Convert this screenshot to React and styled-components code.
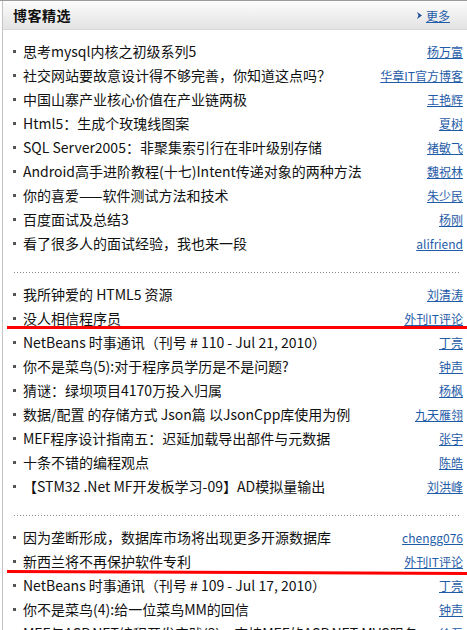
import React from 'react'
import styled, { createGlobalStyle } from 'styled-components'

const GlobalStyle = createGlobalStyle`
  html, body {
    margin: 0;
    padding: 0;
    background: #fff;
    overflow: hidden;
  }
  body {
    font-family: "Noto Sans CJK SC", "Liberation Sans", sans-serif;
  }
`

const Page = styled.div`
  border-top: 1px solid #9a9a9a;
  width: 467px;
  height: 629px;
  overflow: hidden;
`

const Panel = styled.div`
  margin-left: 2px;
  border-left: 1px solid #c4c4c4;
  min-height: 640px;
`

const Header = styled.div`
  height: 28px;
  display: flex;
  align-items: center;
  justify-content: space-between;
  padding: 0 17px 0 10px;
  background: linear-gradient(#fcfcfc, #e3e3e3);
  border-bottom: 1px solid #d8d8d8;
`

const Title = styled.h2`
  margin: 0;
  font-size: 14px;
  font-weight: bold;
  color: #111;
  letter-spacing: 0.5px;
`

const More = styled.a`
  display: flex;
  align-items: center;
  gap: 4px;
  font-size: 12px;
  color: #1f5ca8;
  text-decoration: underline;
  cursor: pointer;
`

const Group = styled.ul`
  list-style: none;
  margin: 0;
  padding: 9px 0 17px;
`

const Divider = styled.div`
  margin: 0 8px 0 11px;
  height: 1px;
  background-image: linear-gradient(to right, #8a8a8a 1px, transparent 1px);
  background-size: 3px 1px;
`

const Row = styled.li`
  position: relative;
  height: 24px;
  display: flex;
  align-items: center;
  padding: 0 4px 0 10px;

  &::after {
    content: '';
    display: ${(p) => (p.$marked ? 'block' : 'none')};
    position: absolute;
    left: 4px;
    right: -12px;
    bottom: ${(p) => (p.$tilt ? '0px' : '1px')};
    height: 3px;
    background: #f00;
    transform: ${(p) => (p.$tilt ? 'rotate(0.25deg)' : 'none')};
    transform-origin: left center;
  }
`

const Bullet = styled.span`
  width: 3px;
  height: 3px;
  background: #555;
  margin-right: 7px;
  flex: none;
`

const Headline = styled.span`
  flex: 1;
  min-width: 0;
  font-size: 14px;
  line-height: 24px;
  color: #111;
  white-space: nowrap;
  overflow: hidden;
`

const Author = styled.a`
  flex: none;
  margin-left: 8px;
  font-size: 12px;
  color: #1f5ca8;
  text-decoration: underline;
  cursor: pointer;
`

const groups = [
  [
    ['思考mysql内核之初级系列5', '杨万富'],
    ['社交网站要故意设计得不够完善，你知道这点吗？', '华章IT官方博客'],
    ['中国山寨产业核心价值在产业链两极', '王艳辉'],
    ['Html5：生成个玫瑰线图案', '夏树'],
    ['SQL Server2005：非聚集索引行在非叶级别存储', '褚敏飞'],
    ['Android高手进阶教程(十七)Intent传递对象的两种方法', '魏祝林'],
    ['你的喜爱——软件测试方法和技术', '朱少民'],
    ['百度面试及总结3', '杨刚'],
    ['看了很多人的面试经验，我也来一段', 'alifriend'],
  ],
  [
    ['我所钟爱的 HTML5 资源', '刘清涛'],
    ['没人相信程序员', '外刊IT评论', 'mark'],
    ['NetBeans 时事通讯（刊号 # 110 - Jul 21, 2010）', '丁亮'],
    ['你不是菜鸟(5):对于程序员学历是不是问题?', '钟声'],
    ['猜谜：绿坝项目4170万投入归属', '杨枫'],
    ['数据/配置 的存储方式 Json篇 以JsonCpp库使用为例', '九天雁翎'],
    ['MEF程序设计指南五：迟延加载导出部件与元数据', '张宇'],
    ['十条不错的编程观点', '陈皓'],
    ['【STM32 .Net MF开发板学习-09】AD模拟量输出', '刘洪峰'],
  ],
  [
    ['因为垄断形成，数据库市场将出现更多开源数据库', 'chengg076'],
    ['新西兰将不再保护软件专利', '外刊IT评论', 'tilt'],
    ['NetBeans 时事通讯（刊号 # 109 - Jul 17, 2010）', '丁亮'],
    ['你不是菜鸟(4):给一位菜鸟MM的回信', '钟声'],
    ['MEF与ASP.NET编程开发实践(3)：支持MEF的ASP.NET MVC服务', '徐磊'],
  ],
]

const Chevron = () => (
  <svg width="5" height="7" viewBox="0 0 5 7">
    <path d="M0 0 L5 3.5 L0 7 L1.5 3.5 Z" fill="#1f4f9a" />
  </svg>
)

const App = () => {
  return (
    <Page>
      <GlobalStyle />
      <Panel>
        <Header>
          <Title>博客精选</Title>
          <More>
            <Chevron />
            更多
          </More>
        </Header>
        {groups.map((items, i) => (
          <React.Fragment key={i}>
            {i > 0 && <Divider />}
            <Group>
              {items.map(([text, author, mark]) => (
                <Row key={text} $marked={!!mark} $tilt={mark === 'tilt'}>
                  <Bullet />
                  <Headline>{text}</Headline>
                  <Author>{author}</Author>
                </Row>
              ))}
            </Group>
          </React.Fragment>
        ))}
      </Panel>
    </Page>
  )
}

export default App
